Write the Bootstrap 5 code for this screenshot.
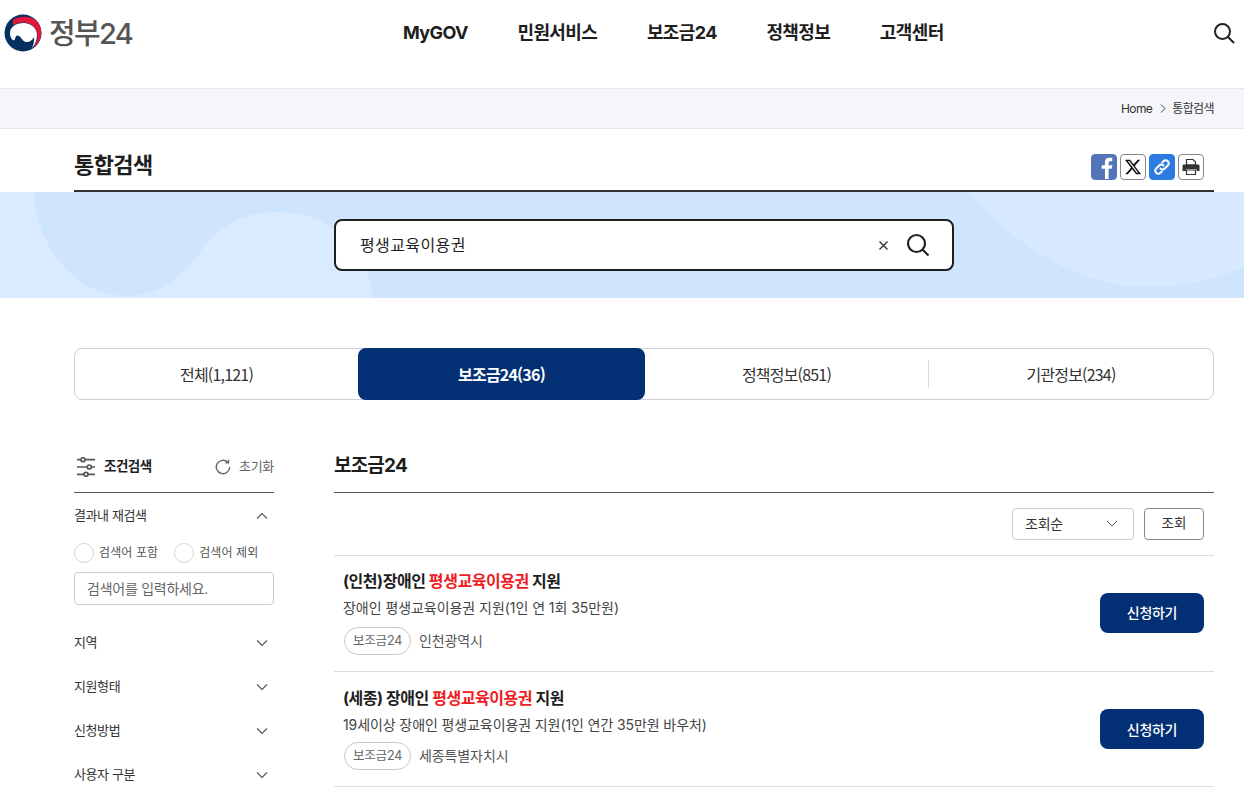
<!DOCTYPE html>
<html lang="ko">
<head>
<meta charset="utf-8">
<title>통합검색 | 정부24</title>
<link rel="stylesheet" href="https://cdn.jsdelivr.net/npm/bootstrap@5.3.0/dist/css/bootstrap.min.css">
<style>
html,body{height:790px;overflow:hidden}
body{font-family:Inter,"Noto Sans CJK KR","Noto Sans",sans-serif;color:#1e1e1e;background:#fff;font-size:14px}
.site-top{height:88px;padding:0 9px 0 4px}
.brand-wrap{width:360px;height:66px;gap:7px;color:#555;font-size:29px;font-weight:500;letter-spacing:-1.7px;line-height:1}
.brand-wrap svg{flex:none}
.main-links{gap:49.7px;height:64px;margin-left:39px}
.main-links a{font-size:18px;font-weight:700;color:#1e1e1e;text-decoration:none;letter-spacing:-.62px}
.top-search{margin-left:auto;height:66px}
.crumb-bar{height:41px;background:#f5f6fa;border-top:1px solid #e6e7ea;border-bottom:1px solid #e9eaed;padding-right:30px;font-size:12px;letter-spacing:-.6px;color:#333}
.crumb-sep{margin:0 6px 0 8px}
.page-frame{width:1140px;margin-left:74px}
.title-row{height:63px;border-bottom:2px solid #333;padding-right:10px}
.title-row h1{font-size:22px;font-weight:700;letter-spacing:-.6px;margin:0 0 12px}
.share-box{gap:3px;margin-bottom:10px}
.share-btn{width:26px;height:26px;border-radius:4px;border:1px solid #888;background:#fff;padding:0;display:flex;align-items:center;justify-content:center}
.share-fb{background:#5474b8;border-color:#5474b8;overflow:hidden}
.share-link{background:#2c7be0;border-color:#2c7be0}
.search-band{height:106px;background:#dbebff;position:relative;overflow:hidden}
.band-art{position:absolute;left:0;top:0}
.search-shell{position:relative;width:620px;height:52px;margin-left:334px;top:27px;border:2px solid #1e1e1e;border-radius:8px;background:#fff;padding:0 22px 0 24px;font-size:16px;letter-spacing:.4px}
.search-x{margin-right:17px}
.tab-strip{height:52px;margin-top:50px;border:1px solid #cdd0d4;border-radius:8px;position:relative;font-family:"Noto Sans CJK KR","Noto Sans",sans-serif}
.tab-strip a{display:flex;align-items:center;justify-content:center;font-size:16px;letter-spacing:-.8px;color:#333;text-decoration:none}
.tab-one{width:283px}
.tab-two{width:287px;background:#033075;color:#fff!important;font-weight:700;border-radius:8px;margin:-1px 0}
.tab-three{width:283px}
.tab-four{flex:1}
.tab-rule{width:1px;height:28px;background:#d5d7da;align-self:center}
.body-split{margin-top:48px;gap:60px}
.filter-col{width:200px;flex:none}
.filter-head{height:45px;border-bottom:1px solid #555;padding:0 0 7px 2px}
.filter-head strong{font-size:13.5px;letter-spacing:-.5px;margin-left:8px}
.reset-box{margin-left:auto;font-size:13px;color:#666;letter-spacing:-.3px;gap:6px}
.group-row{font-size:13px;letter-spacing:-.4px;color:#333;height:44px;padding-right:1px}
.group-first{height:45px}
.radio-row{gap:16px;font-size:12px;color:#555;margin:4px 0 8px;height:22px;letter-spacing:.1px}
.radio-row .form-check{padding:0;margin:0;min-height:0;display:flex;align-items:center;gap:5px}
.radio-row .form-check-input{float:none;margin:0;width:20px;height:20px;border-color:#d5d5d5}
.radio-row label{margin:0}
.kw-box{height:33px;border-color:#ccc;border-radius:4px;font-size:14px;padding:0 12px;margin-bottom:16px;letter-spacing:-.25px}
.kw-box::placeholder{color:#666}
.result-col{flex:1;min-width:0}
.result-head{height:45px;border-bottom:1px solid #555}
.result-head h2{font-size:19px;font-weight:700;letter-spacing:-.8px;margin:0 0 14px}
.sort-row{height:63px;border-bottom:1px solid #ddd;padding:0 10px 1px 0;gap:10px}
.sort-pick{width:122px;height:32px;border-radius:4px;border-color:#ccc;font-size:14px;padding:0 15px 0 12px;color:#333;letter-spacing:-.2px}
.sort-go{width:60px;height:32px;border:1px solid #888;border-radius:4px;font-size:13.5px;color:#333;padding:0;background:#fff}
.hit{height:116px;border-bottom:1px solid #ddd;padding:0 10px 2px 9px}
.hit-text{margin-bottom:1px}
.hit h3{font-size:16px;font-weight:700;margin:0;line-height:22px;letter-spacing:-.45px}
.hit h3 em{font-style:normal;color:#f01c24}
.hit p{font-size:14px;margin:6px 0 9px;line-height:20px;color:#444;letter-spacing:-.05px}
.hit-short{height:115px;padding-bottom:0}
.hit-short .hit-text{margin-bottom:1px}
.hit-short p{margin-bottom:7px;letter-spacing:-.1px}
.hit-tag{border:1px solid #c8c8c8;border-radius:14px;height:28px;width:67px;font-size:12.5px;color:#666;background:#fff;font-weight:400;letter-spacing:-.2px;margin-left:1px;padding-top:5px}
.hit-area{font-size:14px;color:#555;margin:-1px 0 0 8px;letter-spacing:-.1px}
.apply-btn{width:104px;height:40px;border-radius:8px;background:#033075;color:#fff;font-size:14px;font-weight:500;padding:0;border:0;letter-spacing:-.3px}
.apply-btn:hover{background:#033075;color:#fff}
</style>
</head>
<body>
<nav class="navbar site-top align-items-start flex-nowrap">
  <a class="d-flex align-items-center brand-wrap text-decoration-none" href="#">
    <svg width="38" height="38" viewBox="0 0 38 38" aria-hidden="true">
      <circle cx="19" cy="19" r="18.500" fill="#06305f"/>
      <path d="M9 6C14 2 24 1.500 30 5C36 9 38 16 37 22C36 27 33 31 29 34C33 28 34 24 33.500 20C32 13 26 8.500 19.500 8.500C15 8.500 12 9.500 9 11z" fill="#e4163a"/>
      <path d="M6 19C6 13 12 9 19.500 9C27 9 33 14 33 21C33 26 31 31 28 34C30 30 30.500 26 30 23C28 27 25 28.500 22 28C18 27 17 22 13.500 21.500C11.500 21.500 11.500 24 10.500 26C8 27 6 23 6 19z" fill="#fff"/>
    </svg>
    <span>정부24</span>
  </a>
  <div class="d-flex align-items-center main-links">
    <a href="#">MyGOV</a><a href="#">민원서비스</a><a href="#">보조금24</a><a href="#">정책정보</a><a href="#">고객센터</a>
  </div>
  <div class="d-flex align-items-center top-search">
    <svg width="22" height="22" viewBox="0 0 22 22" fill="none" stroke="#222" stroke-width="2" aria-label="검색"><circle cx="9.500" cy="9.500" r="7.500"/><path d="M15 15l6 6"/></svg>
  </div>
</nav>

<div class="crumb-bar d-flex align-items-center justify-content-end">
  <span>Home</span>
  <svg class="crumb-sep" width="6" height="9" viewBox="0 0 6 9" fill="none" stroke="#444"><path d="M1 .5l4 4-4 4"/></svg>
  <span>통합검색</span>
</div>

<div class="page-frame">
  <div class="title-row d-flex align-items-end justify-content-between">
    <h1>통합검색</h1>
    <div class="d-flex share-box">
      <button class="share-btn share-fb" aria-label="페이스북"><svg width="26" height="26" viewBox="0 0 26 26"><path d="M14 26V15h-3.500v-4H14V8c0-3.500 2-5 5-5h3v3.800h-2c-1.500 0-2 .7-2 2V11h4l-.6 4H18v11z" fill="#fff"/></svg></button>
      <button class="share-btn" aria-label="X"><svg width="18" height="18" viewBox="0 0 24 24" fill="#111"><path d="M18.244 2.250h3.308l-7.227 8.260 8.502 11.240H16.170l-5.214-6.817L4.990 21.750H1.680l7.730-8.835L1.254 2.250H8.080l4.713 6.231zm-1.161 17.520h1.833L7.084 4.126H5.117z"/></svg></button>
      <button class="share-btn share-link" aria-label="링크"><svg width="24" height="24" viewBox="0 0 24 24" fill="none" stroke="#fff" stroke-width="2" stroke-linecap="round"><path d="M10.500 13.500a3 3 0 0 0 4.300 0l3-3a3 3 0 0 0-4.300-4.300l-1.300 1.300"/><path d="M13.500 10.500a3 3 0 0 0-4.300 0l-3 3a3 3 0 0 0 4.300 4.300l1.300-1.300"/></svg></button>
      <button class="share-btn" aria-label="인쇄"><svg width="24" height="24" viewBox="0 0 24 24"><path d="M7.500 4.500h6.500l2.500 2.500v3h-9z" fill="#fff" stroke="#333" stroke-width="1.200"/><path d="M3.500 11c0-1 .5-1.500 1.500-1.500h14c1 0 1.500.5 1.500 1.500v5h-3v-2H7v2H3.500z" fill="#333"/><path d="M7.500 15h9v4.500h-9z" fill="#fff" stroke="#333" stroke-width="1.200"/></svg></button>
    </div>
  </div>
</div>

<div class="search-band">
  <svg class="band-art" width="1244" height="106" viewBox="0 0 1244 106" aria-hidden="true">
    <path d="M34 0C36 55 75 104 126 104C165 104 188 78 203 56C222 30 248 20 277 20C330 20 368 55 373 106H1244V0Z" fill="#cfe5fe"/>
    <path d="M970 0C1020 60 1085 95 1147 95C1185 95 1215 87 1244 75V0Z" fill="#d8eaff"/>
  </svg>
  <div class="search-shell d-flex align-items-center">
    <span class="flex-grow-1">평생교육이용권</span>
    <svg class="search-x" width="11" height="11" viewBox="0 0 11 11" fill="none" stroke="#333" stroke-width="1.400" aria-label="지우기"><path d="M1.500 1.500l8 8M9.500 1.500l-8 8"/></svg>
    <svg width="24" height="24" viewBox="0 0 24 24" fill="none" stroke="#222" stroke-width="2.200" aria-label="검색"><circle cx="10.500" cy="10.500" r="8.500"/><path d="M16.500 16.500l6 6"/></svg>
  </div>
</div>

<div class="page-frame">
  <div class="tab-strip nav flex-nowrap">
    <a class="tab-one" href="#">전체(1,121)</a>
    <a class="tab-two" href="#">보조금24(36)</a>
    <a class="tab-three" href="#">정책정보(851)</a>
    <span class="tab-rule"></span>
    <a class="tab-four" href="#">기관정보(234)</a>
  </div>

  <div class="d-flex body-split">
    <aside class="filter-col">
      <div class="filter-head d-flex align-items-center">
        <svg width="20" height="20" viewBox="0 0 20 20" fill="#fff" stroke="#555" stroke-width="1.700" aria-hidden="true"><path d="M1 2.700h18M1 10h18M1 17.300h18"/><circle cx="7" cy="2.700" r="2"/><circle cx="13.300" cy="10" r="2"/><circle cx="10" cy="17.300" r="2"/></svg>
        <strong>조건검색</strong>
        <span class="reset-box d-flex align-items-center">
          <svg width="18" height="16" viewBox="0 0 18 16" fill="none" stroke="#666" stroke-width="1.400" aria-hidden="true"><path d="M14.700 8a6.700 6.700 0 1 1-2-4.800"/><path d="M13.500 .8v3h-3"/></svg>
          초기화
        </span>
      </div>
      <div class="group-row group-first d-flex align-items-center justify-content-between">결과내 재검색
        <svg class="me-1" width="14" height="8" viewBox="0 0 14 8" fill="none" stroke="#555" stroke-width="1.100"><path d="M2 6.500l5-5 5 5"/></svg>
      </div>
      <div class="radio-row d-flex">
        <div class="form-check"><input class="form-check-input" type="radio" name="kw" id="kw1"><label for="kw1">검색어 포함</label></div>
        <div class="form-check"><input class="form-check-input" type="radio" name="kw" id="kw2"><label for="kw2">검색어 제외</label></div>
      </div>
      <input class="form-control kw-box" type="text" placeholder="검색어를 입력하세요.">
      <div class="group-row d-flex align-items-center justify-content-between">지역
        <svg class="me-1" width="14" height="8" viewBox="0 0 14 8" fill="none" stroke="#555" stroke-width="1.100"><path d="M2 1.500l5 5 5-5"/></svg></div>
      <div class="group-row d-flex align-items-center justify-content-between">지원형태
        <svg class="me-1" width="14" height="8" viewBox="0 0 14 8" fill="none" stroke="#555" stroke-width="1.100"><path d="M2 1.500l5 5 5-5"/></svg></div>
      <div class="group-row d-flex align-items-center justify-content-between">신청방법
        <svg class="me-1" width="14" height="8" viewBox="0 0 14 8" fill="none" stroke="#555" stroke-width="1.100"><path d="M2 1.500l5 5 5-5"/></svg></div>
      <div class="group-row d-flex align-items-center justify-content-between">사용자 구분
        <svg class="me-1" width="14" height="8" viewBox="0 0 14 8" fill="none" stroke="#555" stroke-width="1.100"><path d="M2 1.500l5 5 5-5"/></svg></div>
    </aside>

    <section class="result-col">
      <div class="result-head d-flex align-items-end"><h2>보조금24</h2></div>
      <div class="sort-row d-flex align-items-center justify-content-end">
        <div class="form-control sort-pick d-flex align-items-center justify-content-between">조회순
          <svg width="12" height="7" viewBox="0 0 12 7" fill="none" stroke="#555" stroke-width="1"><path d="M1 1l5 5 5-5"/></svg>
        </div>
        <button class="btn sort-go">조회</button>
      </div>
      <div class="hit d-flex align-items-center justify-content-between">
        <div class="hit-text">
          <h3>(인천)장애인 <em>평생교육이용권</em> 지원</h3>
          <p>장애인 평생교육이용권 지원(1인 연 1회 35만원)</p>
          <div class="d-flex align-items-center"><span class="badge hit-tag d-flex align-items-center justify-content-center">보조금24</span><span class="hit-area">인천광역시</span></div>
        </div>
        <button class="btn apply-btn">신청하기</button>
      </div>
      <div class="hit hit-short d-flex align-items-center justify-content-between">
        <div class="hit-text">
          <h3>(세종) 장애인 <em>평생교육이용권</em> 지원</h3>
          <p>19세이상 장애인 평생교육이용권 지원(1인 연간 35만원 바우처)</p>
          <div class="d-flex align-items-center"><span class="badge hit-tag d-flex align-items-center justify-content-center">보조금24</span><span class="hit-area">세종특별자치시</span></div>
        </div>
        <button class="btn apply-btn">신청하기</button>
      </div>
    </section>
  </div>
</div>
</body>
</html>
